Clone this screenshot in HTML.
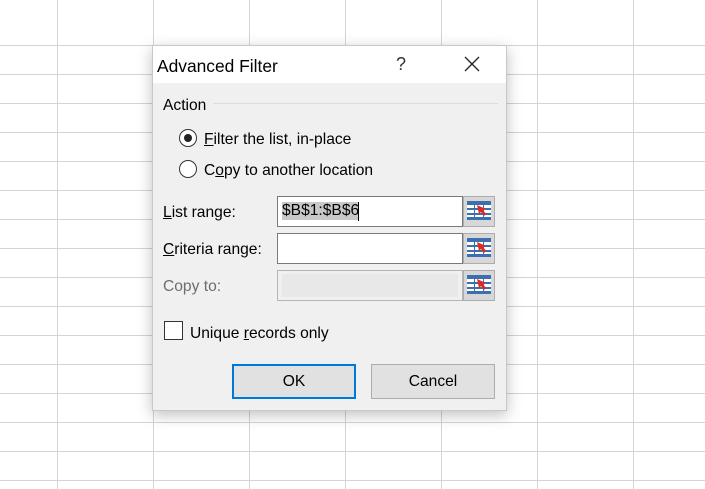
<!DOCTYPE html>
<html><head><style>
body{margin:0;width:705px;height:489px;overflow:hidden;background:#fff;position:relative;font-family:"Liberation Sans",sans-serif;}
.gv{position:absolute;left:0;top:0;width:705px;height:489px;
background-image:linear-gradient(90deg,#d4d4d4 1px,transparent 1px);
background-size:96px 29px;background-position:57px 0;}
.gh{position:absolute;left:0;top:45px;width:705px;height:444px;
background-image:linear-gradient(#d4d4d4 1px,transparent 1px);
background-size:96px 29px;}
.dlg{position:absolute;left:152px;top:45px;width:355px;height:366px;background:#f0f0f0;border:1px solid #c8c8c8;box-sizing:border-box;box-shadow:0 4px 14px rgba(0,0,0,.25);}
.t{position:absolute;left:0;top:0;width:100%;height:37px;background:#fff;}
.a{position:absolute;font-size:15.6px;color:#000;white-space:nowrap}
.r{position:absolute;width:18px;height:18px;border:1px solid #333;border-radius:50%;box-sizing:border-box;background:#fff}
.in{position:absolute;left:124px;width:186px;height:31px;border:1px solid #7a7a7a;box-sizing:border-box;background:#fff}
.ic{position:absolute;left:310px;width:32px;height:31px;background:#d7d7d7;border:1px solid #adadad;box-sizing:border-box}
.btn{position:absolute;top:318px;width:124px;height:35px;box-sizing:border-box;background:#e1e1e1;border:1px solid #adadad;font-size:15.6px;text-align:center;line-height:33px}
</style></head><body>
<div class="gv"></div><div class="gh"></div>
<div class="dlg">
<div class="t"></div>
<div class="a" style="left:4px;top:10px;font-size:17.4px">Advanced Filter</div>
<div class="a" style="left:243px;top:8px;font-size:18px;color:#333">?</div>
<svg style="position:absolute;left:311px;top:10px" width="16" height="16"><path d="M1 1L15 15M15 1L1 15" stroke="#222" stroke-width="1.3"/></svg>
<div class="a" style="left:10px;top:51px">Action</div>
<div style="position:absolute;left:60px;top:57px;width:285px;height:1px;background:#dcdcdc"></div>
<div class="r" style="left:26px;top:83px"><div style="position:absolute;left:4px;top:4px;width:8px;height:8px;border-radius:50%;background:#222"></div></div>
<div class="a" style="left:51px;top:85px"><u>F</u>ilter the list, in-place</div>
<div class="r" style="left:26px;top:114px"></div>
<div class="a" style="left:51px;top:116px">C<u>o</u>py to another location</div>
<div class="a" style="left:10px;top:158px"><u>L</u>ist range:</div>
<div class="in" style="top:150px"><span style="position:absolute;left:4px;top:5px;font-size:15.6px;background:#c8c8c8">$B$1:$B$6</span><span style="position:absolute;left:80px;top:5px;width:1px;height:19px;background:#000"></span></div>
<div class="ic" style="top:150px"></div>
<div class="a" style="left:10px;top:195px"><u>C</u>riteria range:</div>
<div class="in" style="top:187px"></div>
<div class="ic" style="top:187px"></div>
<div class="a" style="left:10px;top:232px;color:#6d6d6d">Copy to:</div>
<div class="in" style="top:224px;background:#f0f0f0;border-color:#b5b5b5"><div style="position:absolute;left:4px;top:3px;right:4px;bottom:3px;background:#e8e8e8"></div></div>
<div class="ic" style="top:224px"></div>
<div style="position:absolute;left:11px;top:275px;width:19px;height:19px;border:1px solid #333;box-sizing:border-box;background:#fff"></div>
<div class="a" style="left:37px;top:279px">Unique <u>r</u>ecords only</div>
<div class="btn" style="left:79px;border:2px solid #0078d7;line-height:31px">OK</div>
<div class="btn" style="left:218px">Cancel</div>
</div>
<svg width="0" height="0" style="position:absolute"><defs><g id="ico"><rect x="0" y="0" width="24" height="19" fill="#fff"/><g fill="#3c6fb0"><rect x="0" y="0" width="24" height="4"/><rect x="0" y="7" width="24" height="2"/><rect x="0" y="12" width="24" height="2"/><rect x="0" y="16" width="24" height="3"/><rect x="7" y="0" width="1" height="19"/><rect x="16" y="0" width="1" height="19"/></g><path d="M10 4l9 4-3 1 3 4-2 2-3-4-2 2z" fill="#e02a1e"/></g></defs></svg>
<svg style="position:absolute;left:467px;top:201px" width="24" height="19"><use href="#ico"/></svg>
<svg style="position:absolute;left:467px;top:238px" width="24" height="19"><use href="#ico"/></svg>
<svg style="position:absolute;left:467px;top:275px" width="24" height="19"><use href="#ico"/></svg>
</body></html>
